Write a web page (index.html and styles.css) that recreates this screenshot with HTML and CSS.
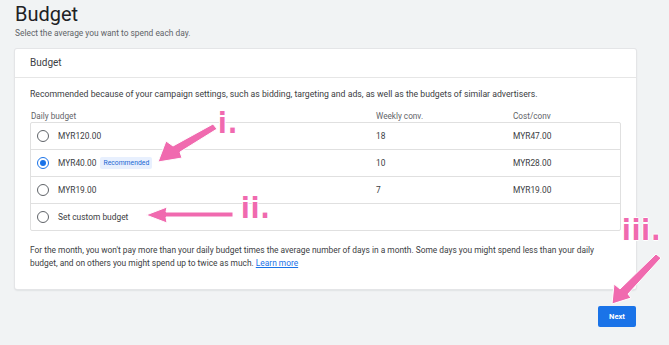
FILE: index.html
```html
<!DOCTYPE html>
<html lang="en">
<head>
  <meta charset="UTF-8">
  <title>Budget</title>
  <link rel="stylesheet" href="styles.css">
</head>
<body>
  <div class="page">
    <h1 class="title">Budget</h1>
    <p class="subtitle">Select the average you want to spend each day.</p>

    <div class="card">
      <div class="card-header">Budget</div>
      <div class="card-body">
        <p class="intro">Recommended because of your campaign settings, such as bidding, targeting and ads, as well as the budgets of similar advertisers.</p>

        <div class="table-head">
          <span class="col-budget">Daily budget</span>
          <span class="col-weekly">Weekly conv.</span>
          <span class="col-cost">Cost/conv</span>
        </div>

        <div class="options">
          <label class="option">
            <span class="col-budget"><span class="radio"></span>MYR120.00</span>
            <span class="col-weekly">18</span>
            <span class="col-cost">MYR47.00</span>
          </label>
          <label class="option">
            <span class="col-budget"><span class="radio checked"></span>MYR40.00 <span class="badge">Recommended</span></span>
            <span class="col-weekly">10</span>
            <span class="col-cost">MYR28.00</span>
          </label>
          <label class="option">
            <span class="col-budget"><span class="radio"></span>MYR19.00</span>
            <span class="col-weekly">7</span>
            <span class="col-cost">MYR19.00</span>
          </label>
          <label class="option">
            <span class="col-budget"><span class="radio"></span>Set custom budget</span>
          </label>
        </div>

        <p class="note">For the month, you won't pay more than your daily budget times the average number of days in a month. Some days you might spend less than your daily budget, and on others you might spend up to twice as much. <a href="#">Learn more</a></p>
      </div>
    </div>

    <div class="actions">
      <button class="next">Next</button>
    </div>
  </div>

  <!-- annotation overlay -->
  <svg class="marks" width="669" height="345" viewBox="0 0 669 345">
    <g fill="#f06aaf" stroke="#fff" stroke-width="1" stroke-linejoin="round">
      <path d="M213 124 L217 129 L180 152 L182 158 L158 162 L166 141 L173 146 Z"/>
      <path d="M233 212 L233 217 L166 217 L167 223 L146 215 L167 207 L166 212 Z"/>
      <path d="M656 254 L661 258 L628 294 L631 298 L612 304 L614 284 L620 289 Z"/>
    </g>
  </svg>
  <span class="mark mark-i">i.</span>
  <span class="mark mark-ii">ii.</span>
  <span class="mark mark-iii">iii.</span>
</body>
</html>
```

FILE: styles.css
```css
body {
  margin: 0;
  background-color: #f1f3f4;
  font-family: Roboto, "Liberation Sans", sans-serif;
  color: #3c4043;
  position: relative;
  width: 669px;
  height: 345px;
  overflow: hidden;
}
.page {
  padding: 2px 33px 0 15px;
}
.title {
  margin: 0;
  font-size: 20px;
  font-weight: 400;
  color: #202124;
  line-height: 24px;
}
.subtitle {
  margin: 1px 0 0;
  font-size: 8.4px;
  color: #5f6368;
  line-height: 12px;
}
.card {
  margin-top: 10px;
  background-color: #fff;
  border-radius: 2px;
  box-shadow: 0 0 0 1px #e4e5e7, 0 1px 2px rgba(60, 64, 67, 0.25);
}
.card-header {
  height: 28px;
  line-height: 28px;
  padding: 0 15px;
  font-size: 10px;
  color: #3c4043;
  border-bottom: 1px solid #e6e6e6;
}
.card-body {
  padding: 10px 15px 19px;
}
.intro {
  margin: 0;
  font-size: 8.7px;
  line-height: 12px;
  color: #3c4043;
}
.table-head {
  display: flex;
  margin-top: 11px;
  font-size: 8.2px;
  line-height: 11px;
  color: #5f6368;
}
.col-budget {
  width: 345px;
  display: flex;
  align-items: center;
}
.col-weekly {
  width: 137px;
}
.col-cost {
  flex: 1;
}
.table-head .col-budget {
  padding-left: 1px;
}
.options {
  border: 1px solid #e0e0e0;
  border-radius: 2px;
}
.option {
  display: flex;
  align-items: center;
  height: 26px;
  font-size: 8.4px;
  color: #3c4043;
  border-top: 1px solid #e0e0e0;
}
.option:first-child {
  border-top: none;
}
.option .col-budget {
  padding-left: 6px;
  width: 339px;
}
.radio {
  width: 10px;
  height: 10px;
  border: 1.4px solid #5f6368;
  border-radius: 50%;
  margin-right: 9px;
  position: relative;
}
.radio.checked {
  border-color: #1a73e8;
}
.radio.checked::after {
  content: "";
  position: absolute;
  left: 2px;
  top: 2px;
  width: 6px;
  height: 6px;
  border-radius: 50%;
  background-color: #1a73e8;
}
.badge {
  margin-left: 4px;
  padding: 2px 3px;
  background-color: #e8f0fe;
  color: #1967d2;
  font-size: 6.8px;
  border-radius: 2px;
}
.note {
  margin: 13px 0 0;
  font-size: 8.4px;
  line-height: 13px;
  color: #3c4043;
}
.note a {
  color: #1a73e8;
}
.actions {
  display: flex;
  justify-content: flex-end;
  margin-top: 17px;
}
.next {
  width: 38px;
  height: 21px;
  border: none;
  border-radius: 2px;
  background-color: #1a73e8;
  color: #fff;
  font-family: Roboto, "Liberation Sans", sans-serif;
  font-size: 7.6px;
  font-weight: 700;
  padding: 0;
}
.marks {
  position: absolute;
  left: 0;
  top: 0;
  pointer-events: none;
}
.mark {
  position: absolute;
  font-family: "DejaVu Sans Condensed", "DejaVu Sans", sans-serif;
  font-weight: 700;
  font-size: 28px;
  line-height: 1;
  color: #f06aaf;
  letter-spacing: 1px;
  text-shadow: 1px 0 #fff, -1px 0 #fff, 0 1px #fff, 0 -1px #fff;
}
.mark-i {
  left: 218px;
  top: 110px;
}
.mark-ii {
  left: 241px;
  top: 195px;
}
.mark-iii {
  left: 622px;
  top: 217px;
}
```
